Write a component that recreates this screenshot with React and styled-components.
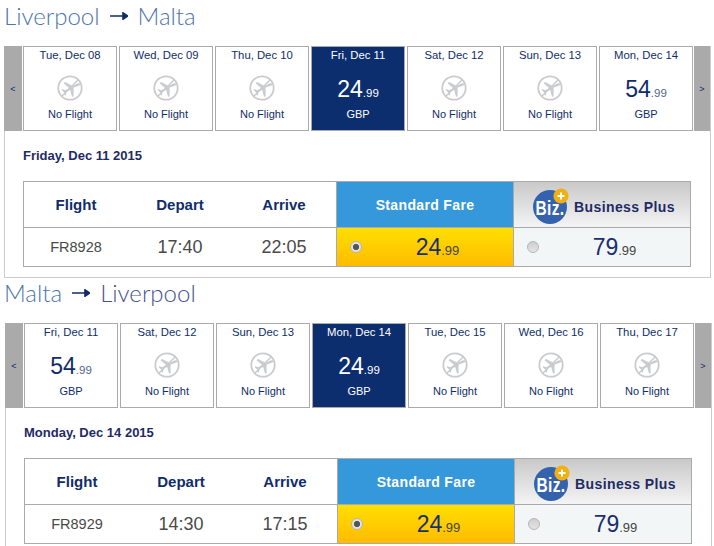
import React from 'react';
import styled, { createGlobalStyle } from 'styled-components';

const navy = '#0f2d6b';

const GlobalStyle = createGlobalStyle`
  html, body {
    margin: 0;
    background: #fff;
    overflow: hidden;
  }
  body {
    font-family: "Liberation Sans", Arial, sans-serif;
    color: ${navy};
  }
`;

const Page = styled.div`
  width: 714px;
  height: 546px;
  overflow: hidden;
`;

const Leg = styled.section`
  padding-left: ${(p) => (p.$shift ? 5 : 4)}px;
  width: 707px;
`;

const Title = styled.h1`
  align-items: center;
  display: flex;
  font-family: Lato, sans-serif;
  font-size: 24px;
  font-weight: 300;
  gap: 10px;
  height: ${(p) => p.$height}px;
  margin: 0 0 0 ${(p) => (p.$shift ? -1 : 0)}px;
  padding-bottom: ${(p) => p.$bottom}px;
`;

const City = styled.span`
  color: ${(p) => p.$color};
`;

const Panel = styled.div`
  border-left: 1px solid #ccc;
  border-right: 1px solid #ccc;
  border-bottom: 1px solid #ccc;
  box-sizing: border-box;
  height: ${(p) => p.$height}px;
`;

const Strip = styled.div`
  display: flex;
  height: 85px;
  margin-left: -1px;
  margin-right: -1px;
`;

const Arrow = styled.button`
  align-items: center;
  background: #aaa;
  border: 0;
  color: ${navy};
  display: flex;
  flex: 0 0 ${(p) => p.$width}px;
  font-family: "Liberation Sans", sans-serif;
  font-size: 9px;
  justify-content: center;
  margin: 0;
  padding: 0;
`;

const Days = styled.div`
  display: flex;
  gap: 2px;
  padding: 0 1px;
`;

const Day = styled.div`
  align-items: center;
  background: ${(p) => (p.$active ? '#0c2e6e' : '#fff')};
  border: 1px solid #aaa;
  box-sizing: border-box;
  color: ${(p) => (p.$active ? '#fff' : navy)};
  display: flex;
  flex-direction: column;
  height: 85px;
  width: 94px;
`;

const DayName = styled.div`
  font-size: 11.3px;
  line-height: 14px;
  margin-top: 1px;
`;

const NoFlightIcon = styled.svg`
  display: block;
  height: 26px;
  margin-top: 13px;
  width: 26px;
`;

const NoFlightLabel = styled.div`
  font-size: 11px;
  line-height: 14px;
  margin-top: 6px;
`;

const DayPrice = styled.div`
  font-size: 23px;
  line-height: 26px;
  margin-top: 14px;
`;

const Cents = styled.span`
  font-size: 11.5px;
  opacity: ${(p) => (p.$muted ? 0.75 : 1)};
`;

const Currency = styled.div`
  font-size: 11px;
  line-height: 14px;
  margin-top: 1px;
`;

const DateLabel = styled.h2`
  color: #1f2a66;
  font-size: 13px;
  font-weight: bold;
  line-height: 14px;
  margin: 18px 0 0 18px;
`;

const FareTable = styled.div`
  border: 1px solid #aaa;
  box-sizing: border-box;
  display: grid;
  grid-template-columns: 104px 104px 104px 177px 177px;
  grid-template-rows: 46px 38px;
  height: 86px;
  margin: 18px 0 0 18px;
  width: 668px;
`;

const HeadCell = styled.div`
  align-items: center;
  border-bottom: 1px solid #aaa;
  color: #0f2d6b;
  display: flex;
  font-size: 15px;
  font-weight: bold;
  justify-content: center;
`;

const InfoCell = styled.div`
  align-items: center;
  color: #4a4a4a;
  display: flex;
  font-size: ${(p) => p.$size}px;
  justify-content: center;
`;

const StandardHead = styled(HeadCell)`
  background: #3498db;
  border-left: 1px solid #aaa;
  color: #fff;
  font-size: 14px;
  letter-spacing: 0.35px;
`;

const BusinessHead = styled(HeadCell)`
  background: linear-gradient(#c9c9c9, #f4f4f4);
  border-left: 1px solid #aaa;
  color: #1f2a66;
  font-size: 14px;
  gap: 5px;
  justify-content: flex-start;
  letter-spacing: 0.4px;
  padding-left: 19px;
`;

const BizLogo = styled.svg`
  display: block;
  flex: none;
  height: 36px;
  margin-top: 2px;
  width: 36px;
`;

const BusinessName = styled.span`
  margin-top: 5px;
`;

const FareCell = styled.label`
  align-items: center;
  background: ${(p) => (p.$standard ? 'linear-gradient(#ffdf00, #ffbb00)' : '#f3f6f7')};
  border-left: 1px solid #aaa;
  color: #1a2f6e;
  display: flex;
  padding-left: 13px;
`;

const Radio = styled.span`
  background: ${(p) =>
    p.$checked
      ? 'radial-gradient(circle, #555 0 2.8px, #e2e2e2 3.4px)'
      : 'linear-gradient(#cfcfcf, #e4e4e4)'};
  border: 1px solid #b5b5b5;
  border-radius: 50%;
  box-sizing: border-box;
  display: block;
  flex: none;
  height: 12px;
  width: 12px;
`;

const FarePrice = styled.div`
  flex: 1;
  font-size: 23px;
  text-align: center;
`;

const FareCents = styled.span`
  color: #444;
  font-size: 13px;
`;

const NoFlight = () => (
  <NoFlightIcon viewBox="0 0 26 26" fill="none">
    <circle cx="13" cy="13" r="11.7" stroke="#c9cbce" strokeWidth="1.8" />
    <path d="M21.5 4.5 4.5 21.5" stroke="#c9cbce" strokeWidth="1.4" />
    <path
      d="M21.6 8.2c.9-1 .6-2.2-.7-2.1-1 .1-2 .7-2.8 1.5l-2.9 2.9-8.4-2.2-1.3 1.3 6.6 3.6-3 3.2-3-.5-1 1 3.1 1.7 1.7 3.1 1-1-.5-3 3.2-3 3.6 6.6 1.3-1.3-2.2-8.4z"
      fill="#c9cbce"
      transform="rotate(14 13 13)"
    />
  </NoFlightIcon>
);

const Biz = () => (
  <BizLogo viewBox="0 0 36 36">
    <circle cx="17" cy="19" r="17" fill="#3462ad" />
    <text
      x="23"
      y="27"
      fill="#fff"
      fontFamily="Liberation Sans, sans-serif"
      fontSize="21"
      fontWeight="bold"
      textAnchor="middle"
      transform="scale(0.74 1)"
    >
      Biz.
    </text>
    <circle cx="28" cy="8" r="7.6" fill="#efb012" />
    <path d="M28 4.5v7M24.5 8h7" stroke="#fff" strokeWidth="2" />
  </BizLogo>
);

const DayCard = ({ day }) => (
  <Day $active={day.active}>
    <DayName>{day.name}</DayName>
    {day.price ? (
      <>
        <DayPrice>
          {day.price}
          <Cents $muted={!day.active}>.99</Cents>
        </DayPrice>
        <Currency>GBP</Currency>
      </>
    ) : (
      <>
        <NoFlight />
        <NoFlightLabel>No Flight</NoFlightLabel>
      </>
    )}
  </Day>
);

const legs = [
  {
    from: 'Liverpool',
    to: 'Malta',
    fromColor: '#4d76ab',
    toColor: '#4d76ab',
    date: 'Friday, Dec 11 2015',
    flight: 'FR8928',
    depart: '17:40',
    arrive: '22:05',
    titleHeight: 31,
    titleBottom: 15,
    panelHeight: 232,
    days: [
      { name: 'Tue, Dec 08' },
      { name: 'Wed, Dec 09' },
      { name: 'Thu, Dec 10' },
      { name: 'Fri, Dec 11', price: 24, active: true },
      { name: 'Sat, Dec 12' },
      { name: 'Sun, Dec 13' },
      { name: 'Mon, Dec 14', price: 54 },
    ],
  },
  {
    from: 'Malta',
    to: 'Liverpool',
    fromColor: '#4d76ab',
    toColor: '#46528f',
    date: 'Monday, Dec 14 2015',
    flight: 'FR8929',
    depart: '14:30',
    arrive: '17:15',
    titleHeight: 29,
    titleBottom: 16,
    panelHeight: 240,
    shift: true,
    days: [
      { name: 'Fri, Dec 11', price: 54 },
      { name: 'Sat, Dec 12' },
      { name: 'Sun, Dec 13' },
      { name: 'Mon, Dec 14', price: 24, active: true },
      { name: 'Tue, Dec 15' },
      { name: 'Wed, Dec 16' },
      { name: 'Thu, Dec 17' },
    ],
  },
];

const FlightLeg = ({ leg }) => (
  <Leg $shift={leg.shift}>
    <Title $height={leg.titleHeight} $bottom={leg.titleBottom} $shift={leg.shift}>
      <City $color={leg.fromColor}>{leg.from}</City>
      <svg width="18" height="8" viewBox="0 0 18 8">
        <path d="M0 4h17M13 .8 17.5 4 13 7.2z" stroke={navy} strokeWidth="1.6" fill={navy} />
      </svg>
      <City $color={leg.toColor}>{leg.to}</City>
    </Title>
    <Panel $height={leg.panelHeight}>
      <Strip>
        <Arrow $width={18}>&lt;</Arrow>
        <Days>
          {leg.days.map((day) => (
            <DayCard key={day.name} day={day} />
          ))}
        </Days>
        <Arrow $width={16}>&gt;</Arrow>
      </Strip>
      <DateLabel>{leg.date}</DateLabel>
      <FareTable>
        <HeadCell>Flight</HeadCell>
        <HeadCell>Depart</HeadCell>
        <HeadCell>Arrive</HeadCell>
        <StandardHead>Standard Fare</StandardHead>
        <BusinessHead>
          <Biz />
          <BusinessName>Business Plus</BusinessName>
        </BusinessHead>
        <InfoCell $size={14.5}>{leg.flight}</InfoCell>
        <InfoCell $size={18}>{leg.depart}</InfoCell>
        <InfoCell $size={18}>{leg.arrive}</InfoCell>
        <FareCell $standard>
          <Radio $checked />
          <FarePrice>
            24<FareCents>.99</FareCents>
          </FarePrice>
        </FareCell>
        <FareCell>
          <Radio />
          <FarePrice>
            79<FareCents>.99</FareCents>
          </FarePrice>
        </FareCell>
      </FareTable>
    </Panel>
  </Leg>
);

const App = () => (
  <Page>
    <GlobalStyle />
    {legs.map((leg) => (
      <FlightLeg key={leg.flight} leg={leg} />
    ))}
  </Page>
);

export default App;
